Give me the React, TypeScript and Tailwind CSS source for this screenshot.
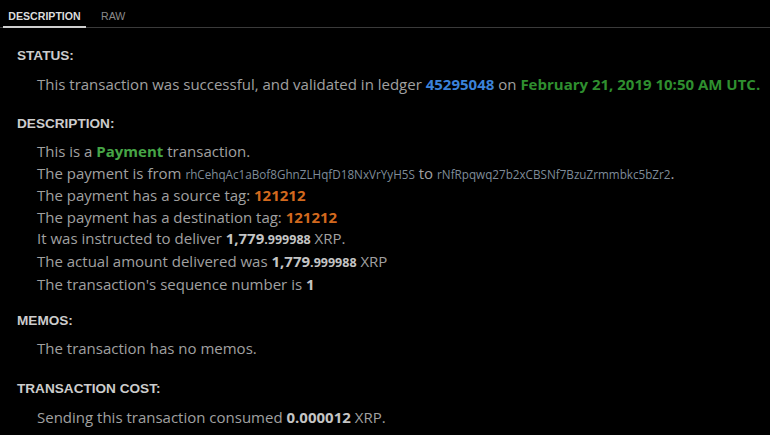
import React from 'react'

const Heading: React.FC<{ title: string }> = ({ title }) => (
  <div className="font-['Liberation_Sans',Arial,sans-serif] font-bold text-[13.6px] text-[#cccccc] leading-[16px]">{title}</div>
)

const Amount: React.FC<{ whole: string; frac: string }> = ({ whole, frac }) => (
  <span className="font-bold text-[#c4c4c4]">
    {whole}
    <span className="text-[12.5px]">{frac}</span>
  </span>
)

const App: React.FC = () => {
  return (
    <div className="w-[770px] h-[435px] bg-black overflow-hidden font-['Open_Sans',sans-serif] text-[15px] text-[#a0a0a0]">
      <div className="flex items-end h-[28px] border-b border-[#3a3a3a] font-['Liberation_Sans',Arial,sans-serif] text-[10.6px] leading-[13px]">
        <div className="ml-[3px] w-[83px] text-center pb-[3px] border-b-2 border-[#cfcfcf] -mb-px font-bold text-[#dcdcdc]">DESCRIPTION</div>
        <div className="ml-[15px] pb-[4px] text-[#8a8a8a]">RAW</div>
      </div>

      <div className="pl-[17px] pt-[20px]">
        <Heading title="STATUS:" />
        <div className="pl-[20px] pt-[9px] leading-[22px]">
          This transaction was successful, and validated in ledger{' '}
          <span className="font-bold text-[#3b82d9]">45295048</span> on{' '}
          <span className="font-bold text-[#2f8f2f]">February 21, 2019 10:50 AM UTC.</span>
        </div>

        <div className="pt-[21px]">
          <Heading title="DESCRIPTION:" />
        </div>
        <div className="pl-[20px] pt-[9px] leading-[21.6px]">
          <div>
            This is a <span className="font-bold text-[#46a546]">Payment</span> transaction.
          </div>
          <div>
            The payment is from{' '}
            <span className="text-[11.7px] text-[#7f8c99]">rhCehqAc1aBof8GhnZLHqfD18NxVrYyH5S</span> to{' '}
            <span className="text-[11.7px] text-[#7f8c99]">rNfRpqwq27b2xCBSNf7BzuZrmmbkc5bZr2</span>.
          </div>
          <div>
            The payment has a source tag: <span className="font-bold text-[#d2691e]">121212</span>
          </div>
          <div>
            The payment has a destination tag: <span className="font-bold text-[#d2691e]">121212</span>
          </div>
          <div>
            It was instructed to deliver <Amount whole="1,779" frac=".999988" /> XRP.
          </div>
          <div>
            The actual amount delivered was <Amount whole="1,779" frac=".999988" /> XRP
          </div>
          <div>
            The transaction's sequence number is <span className="font-bold text-[#c4c4c4]">1</span>
          </div>
        </div>

        <div className="pt-[18px]">
          <Heading title="MEMOS:" />
        </div>
        <div className="pl-[20px] pt-[8px] leading-[22px]">The transaction has no memos.</div>

        <div className="pt-[22px]">
          <Heading title="TRANSACTION COST:" />
        </div>
        <div className="pl-[20px] pt-[9px] leading-[22px]">
          Sending this transaction consumed <Amount whole="0.000012" frac="" /> XRP.
        </div>
      </div>
    </div>
  )
}

export default App
